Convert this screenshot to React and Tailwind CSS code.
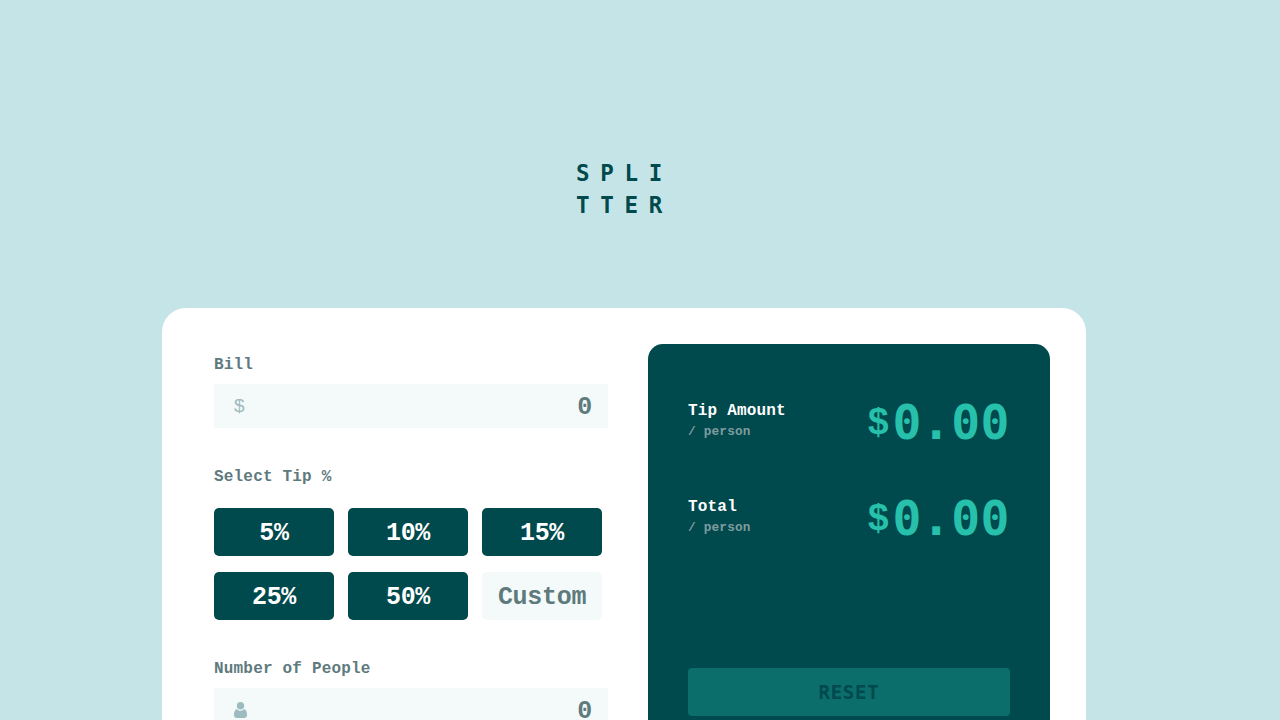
const tips = ['5%', '10%', '15%', '25%', '50%'];

function PersonIcon() {
  return (
    <svg width="13" height="16" viewBox="0 0 13 16" fill="#9ebbbd">
      <ellipse cx="6.5" cy="3.8" rx="3.7" ry="3.8" />
      <path d="M2.8 7C1 7.6 0 9.6 0 12.8C0 15 1 16 3 16H10C12 16 13 15 13 12.8C13 9.6 12 7.6 10.2 7C9.2 8.2 7.9 8.8 6.5 8.8C5.1 8.8 3.8 8.2 2.8 7Z" />
    </svg>
  );
}

function Label({ children }) {
  return (
    <div className="h-6 text-[16px] leading-[26px] tracking-[0.19px] whitespace-pre text-[#5e7a7d]">{children}</div>
  );
}

function Field({ icon }) {
  return (
    <div className="mt-2 flex h-11 w-[394px] items-center justify-between bg-[#f4fafa] pr-4 pl-5">
      {icon}
      <span className="pt-[3px] text-[25px] leading-6 tracking-[-0.31px] text-[#5e7a7d]">0</span>
    </div>
  );
}

function Amount({ title }) {
  return (
    <div className="flex h-[72px] items-center justify-between">
      <div>
        <div className="text-[16px] leading-6 tracking-[0.19px] text-white">{title}</div>
        <div className="text-[12.8px] leading-[18px] tracking-[0.15px] text-[#7f9c9f]">/ person</div>
      </div>
      <div className="flex items-center pt-[3px] text-[#26c0ab]">
        <span className="pr-1 font-['Liberation_Sans',sans-serif] text-[37px] leading-[66px]">$</span>
        <span className="font-['DejaVu_Sans_Mono',monospace] text-[48px] leading-[66px] tracking-[0.48px]">0.00</span>
      </div>
    </div>
  );
}

export default function App() {
  return (
    <div className="h-screen overflow-hidden bg-[#c5e4e7] font-['Liberation_Mono',monospace] font-bold">
      <h1 className="ml-[576px] pt-[157px] font-['DejaVu_Sans_Mono',monospace] text-[22.5px] leading-8 tracking-[10.7px] text-[#00494d]">
        SPLI
        <br />
        TTER
      </h1>
      <main className="mt-[87px] ml-[162px] flex h-[484px] w-[924px] justify-between rounded-[24px] bg-white py-9 pr-9 pl-[52px]">
        <section className="w-[394px] pt-2">
          <Label>Bill</Label>
          <Field icon={<span className="font-['Liberation_Sans',sans-serif] text-[19px] leading-5 font-normal text-[#9ebbbd]">$</span>} />
          <div className="mt-9">
            <Label>Select Tip %</Label>
          </div>
          <div className="mt-5 grid w-[388px] grid-cols-3 gap-x-3.5 gap-y-4 text-[25px] leading-[52px] tracking-[-0.31px]">
            {tips.map((tip) => (
              <button key={tip} className="h-12 rounded-[5px] bg-[#00494d] text-white">
                {tip}
              </button>
            ))}
            <button className="h-12 rounded-[5px] bg-[#f4fafa] text-[#5e7a7d]">Custom</button>
          </div>
          <div className="mt-9">
            <Label>Number of People</Label>
          </div>
          <Field icon={<PersonIcon />} />
        </section>
        <section className="h-[412px] w-[402px] rounded-[15px] bg-[#00494d] px-10 pt-10">
          <Amount title="Tip Amount" />
          <div className="mt-6">
            <Amount title="Total" />
          </div>
          <button className="mt-[116px] h-12 w-full rounded-[4px] bg-[#0c6e6a] font-['DejaVu_Sans_Mono',monospace] text-[19px] leading-[48px] tracking-[0.8px] text-[#00494d]">
            RESET
          </button>
        </section>
      </main>
    </div>
  );
}
